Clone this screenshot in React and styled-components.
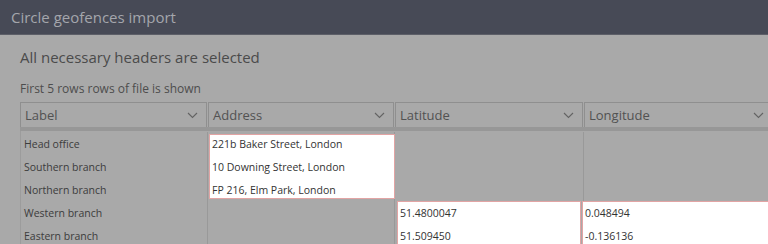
import React from "react";
import styled, { createGlobalStyle } from "styled-components";

const Global = createGlobalStyle`
  html, body { margin: 0; padding: 0; background: #a9a9a9; overflow: hidden; }
  body { font-family: "Open Sans", "Noto Sans", sans-serif; }
`;

const Page = styled.div`
  width: 768px;
  height: 244px;
  overflow: hidden;
  background: #a9a9a9;
`;

const TopBar = styled.div`
  height: 35px;
  background: #474a56;
  display: flex;
  align-items: center;
  padding-left: 11px;
  box-sizing: border-box;
  border-bottom: 1px solid #5d5f68;
`;

const Title = styled.div`
  color: #a4a6ac;
  font-size: 15px;
`;

const Content = styled.div`
  padding: 10px 0 0 20px;
`;

const Heading = styled.div`
  color: #4b4b4b;
  font-size: 15px;
  line-height: 24px;
`;

const Note = styled.div`
  color: #4d4d4d;
  font-size: 12px;
  line-height: 16px;
  margin-top: 12px;
`;

const Cols = "188px 187px 189px 190px";

const HeaderRow = styled.div`
  display: grid;
  grid-template-columns: ${Cols};
  margin-top: 5px;
  border-bottom: 4px solid #979797;
`;

const HeaderCell = styled.div`
  height: 25px;
  border: 1px solid #8f8f8f;
  border-bottom: none;
  margin-right: 1px;
  display: flex;
  align-items: center;
  justify-content: space-between;
  padding: 0 8px 0 4px;
  color: #525252;
  font-size: 13px;
  box-sizing: border-box;
`;

const Chevron = () => (
  <svg width="11" height="7" viewBox="0 0 11 7" fill="none">
    <path d="M1 1l4.5 4.5L10 1" stroke="#636363" strokeWidth="1.1" />
  </svg>
);

const Body = styled.div`
  display: grid;
  grid-template-columns: ${Cols};
  border-left: 1px solid #9c9c9c;
  padding-top: 1px;
`;

const Column = styled.div`
  display: flex;
  flex-direction: column;
  border-right: 1px solid #999;
  margin-right: 1px;
`;

const Cell = styled.div`
  height: 23px;
  flex: none;
  display: flex;
  align-items: center;
  padding-left: 3px;
  color: #3c3c3c;
  font-size: 10.5px;
  white-space: nowrap;
`;

const Highlight = styled.div`
  background: #fff;
  border: 1px solid #e2a4a4;
  margin: ${(p) => p.$m};
  ${Cell} { color: #333; padding-left: 2px; }
`;

const HighlightRows = styled.div`
  display: flex;
  flex-direction: column;
  margin: ${(p) => p.$m};
`;

const Gap = styled.div`
  height: ${(p) => p.$h}px;
  flex: none;
`;

const labels = ["Head office", "Southern branch", "Northern branch", "Western branch", "Eastern branch"];

export default function App() {
  return (
    <Page>
      <Global />
      <TopBar>
        <Title>Circle geofences import</Title>
      </TopBar>
      <Content>
        <Heading>All necessary headers are selected</Heading>
        <Note>First 5 rows rows of file is shown</Note>
        <HeaderRow>
          {["Label", "Address", "Latitude", "Longitude"].map((h) => (
            <HeaderCell key={h}>
              {h}
              <Chevron />
            </HeaderCell>
          ))}
        </HeaderRow>
        <Body>
          <Column>
            {labels.map((l) => (
              <Cell key={l}>{l}</Cell>
            ))}
          </Column>
          <Column>
            <Highlight $m="2px -1px 0 0">
              <HighlightRows $m="-3px 0">
                <Cell>221b Baker Street, London</Cell>
                <Cell>10 Downing Street, London</Cell>
                <Cell>FP 216, Elm Park, London</Cell>
              </HighlightRows>
            </Highlight>
          </Column>
          <Column>
            <Gap $h={69} />
            <Highlight $m="0 2px 0 1px">
              <HighlightRows $m="-1px 0 0">
                <Cell>51.4800047</Cell>
                <Cell>51.509450</Cell>
              </HighlightRows>
            </Highlight>
          </Column>
          <Column>
            <Gap $h={69} />
            <Highlight $m="0 0 0 -3px">
              <HighlightRows $m="-1px 0 0">
                <Cell>0.048494</Cell>
                <Cell>-0.136136</Cell>
              </HighlightRows>
            </Highlight>
          </Column>
        </Body>
      </Content>
    </Page>
  );
}
